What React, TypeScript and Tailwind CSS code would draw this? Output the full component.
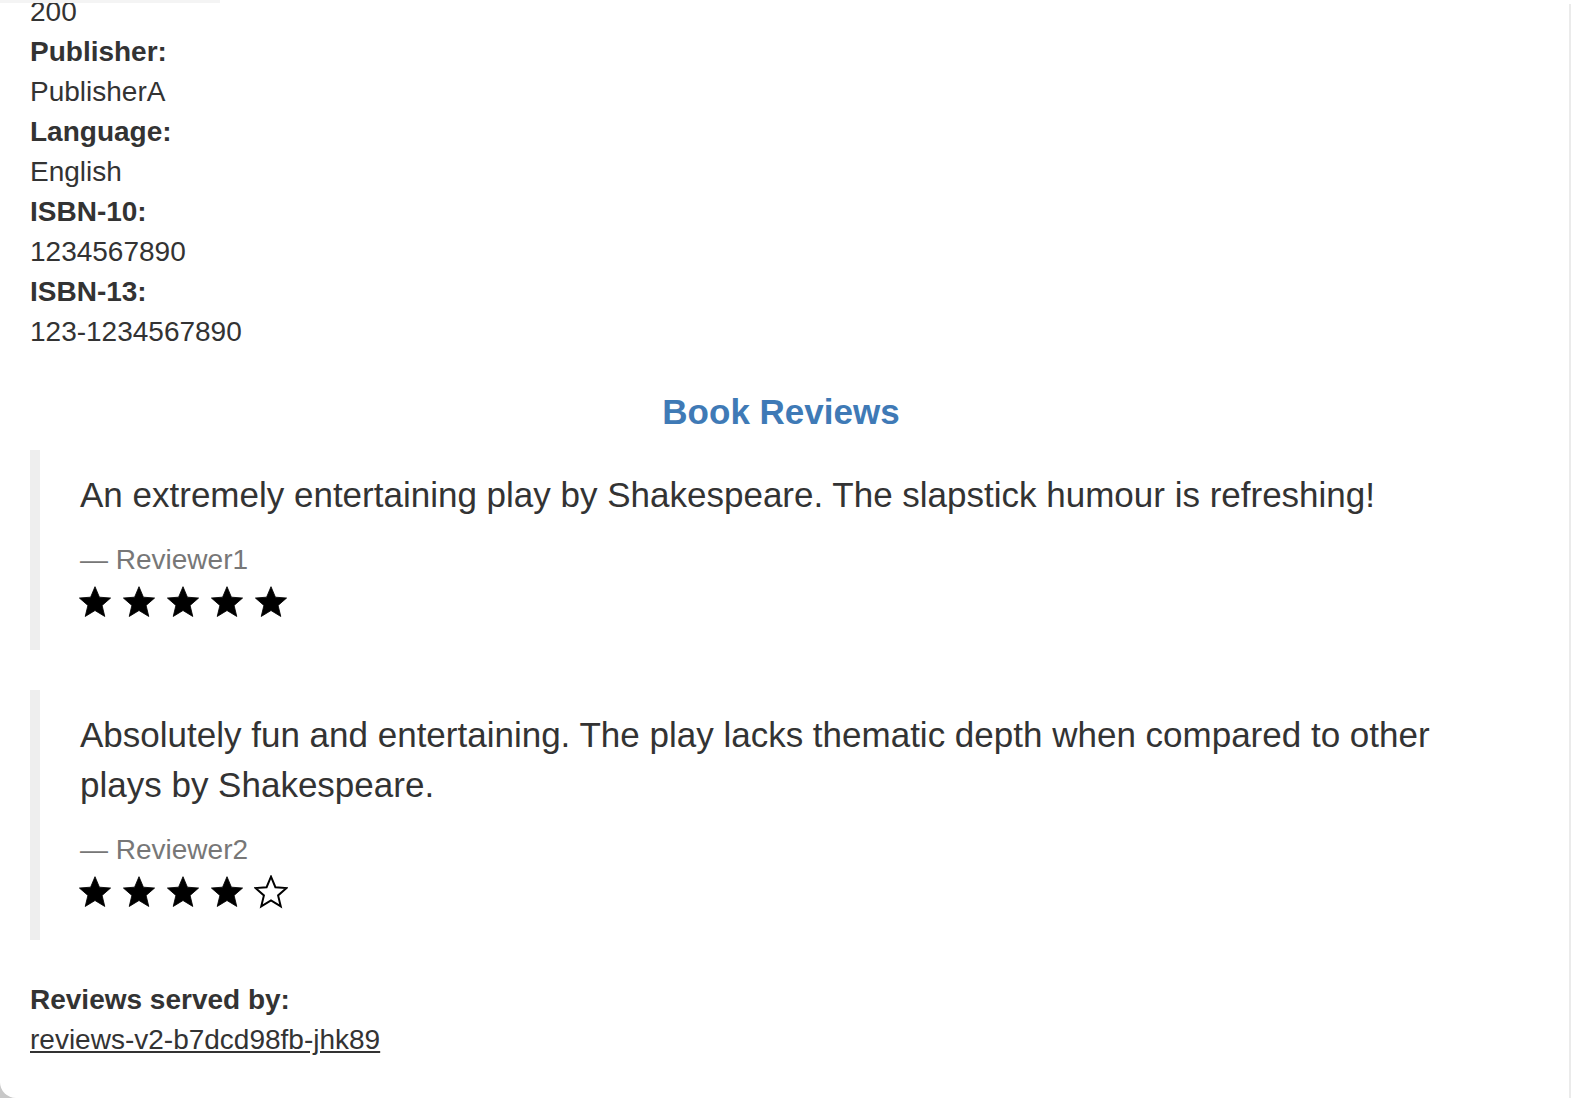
import React from "react";

// Book details page (scrolled), reviews section in the style of bootstrap 3 at 2x.

type Review = {
  text: string;
  reviewer: string;
  stars: number;
};

const reviews: Review[] = [
  {
    text: "An extremely entertaining play by Shakespeare. The slapstick humour is refreshing!",
    reviewer: "Reviewer1",
    stars: 5,
  },
  {
    text: "Absolutely fun and entertaining. The play lacks thematic depth when compared to other plays by Shakespeare.",
    reviewer: "Reviewer2",
    stars: 4,
  },
];

const details: [string, string][] = [
  ["Publisher:", "PublisherA"],
  ["Language:", "English"],
  ["ISBN-10:", "1234567890"],
  ["ISBN-13:", "123-1234567890"],
];

const STAR_POINTS =
  "12,1.2 15.1,8.6 23,9.2 17,14.4 18.9,22.2 12,18 5.1,22.2 7,14.4 1,9.2 8.9,8.6";

function Star({ filled }: { filled: boolean }) {
  return (
    <svg viewBox="0 0 24 24" className="h-[34px] w-[34px]">
      <polygon
        points={STAR_POINTS}
        fill={filled ? "#000" : "none"}
        stroke="#000"
        strokeWidth={filled ? 0.6 : 1.4}
        strokeLinejoin="miter"
      />
    </svg>
  );
}

function ReviewQuote({ review }: { review: Review }) {
  return (
    <blockquote className="mb-[40px] border-l-[10px] border-[#eeeeee] py-[20px] pl-[40px] pr-[40px] text-[35px] leading-[50px]">
      <p className="mb-[20px]">{review.text}</p>
      <footer className="text-[28px] leading-[40px] text-[#777777]">
        {"\u2014\u00a0"}
        {review.reviewer}
      </footer>
      <div className="-ml-[2px] flex h-[50px] items-start gap-[10px] pt-[5px]">
        {[0, 1, 2, 3, 4].map((i) => (
          <Star key={i} filled={i < review.stars} />
        ))}
      </div>
    </blockquote>
  );
}

export default function App() {
  return (
    <div className="relative h-[1098px] w-[1574px] overflow-hidden bg-white font-['Liberation_Sans',Arial,sans-serif] text-[#333333]">
      {/* browser chrome leftovers */}
      <div className="absolute left-0 top-0 h-[3px] w-[220px] bg-[#f4f4f4]" />
      <div className="absolute bottom-0 right-[3px] top-[4px] w-[2px] bg-[#ebebeb]" />

      <div className="-mt-[8px] w-[1562px] px-[30px]">
        <dl className="mb-[40px] text-[28px] leading-[40px]">
          <dd>200</dd>
          {details.map(([label, value]) => (
            <React.Fragment key={label}>
              <dt className="font-bold">{label}</dt>
              <dd>{value}</dd>
            </React.Fragment>
          ))}
        </dl>

        <h4 className="mb-[18px] text-center text-[35px] font-semibold leading-[40px] text-[#3f7ab6]">
          Book Reviews
        </h4>

        {reviews.map((review) => (
          <ReviewQuote key={review.reviewer} review={review} />
        ))}

        <dl className="text-[28px] leading-[40px]">
          <dt className="font-bold">Reviews served by:</dt>
          <dd>
            <u>reviews-v2-b7dcd98fb-jhk89</u>
          </dd>
        </dl>
      </div>

      <div className="absolute bottom-0 left-0 h-[16px] w-[16px] bg-[#c8c8c8]">
        <div className="h-full w-full rounded-bl-[16px] bg-white" />
      </div>
    </div>
  );
}
